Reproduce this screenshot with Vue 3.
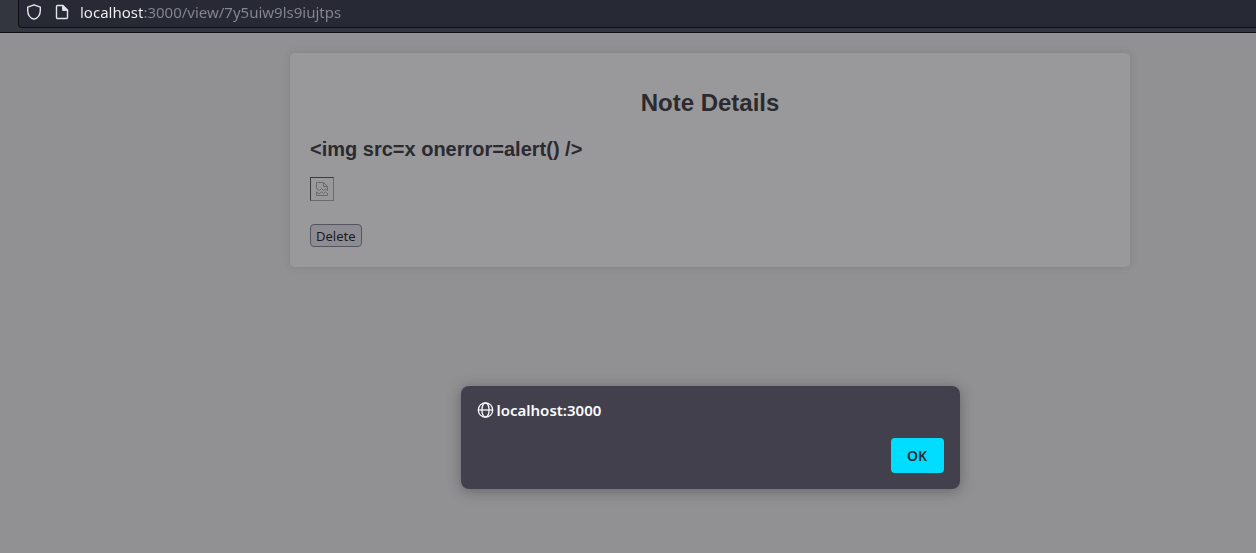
<script setup>
import { ref } from 'vue'

const address = ref('localhost:3000/view/7y5uiw9ls9iujtps')
const host = 'localhost:3000'
const note = { title: '<img src=x onerror=alert() />' }
const alertOpen = ref(true)
</script>

<template>
  <div class="browser">
    <header class="toolbar">
      <div class="urlbar">
        <svg class="icon" viewBox="0 0 16 16" aria-hidden="true">
          <path d="M8 .8 14.3 3.2V6.4C14.3 10.6 12 13.9 8 15.2 4 13.9 1.7 10.6 1.7 6.4V3.2Z" />
        </svg>
        <svg class="icon page-icon" viewBox="0 0 16 16" aria-hidden="true">
          <path d="M3.500 1.500H9L13.500 6V13.500a1 1 0 0 1-1 1H3.500a1 1 0 0 1-1-1V2.500a1 1 0 0 1 1-1Z" />
          <path class="fold" d="M8.600 1.500V6.400H13.500Z" />
        </svg>
        <input v-model="address" class="address" type="text" aria-label="Address" spellcheck="false" />
      </div>
    </header>

    <main class="page">
      <section class="card">
        <h2>Note Details</h2>
        <h3>{{ note.title }}</h3>
        <div class="broken" role="img" aria-label="Broken image">
          <svg viewBox="0 0 14 16" aria-hidden="true">
            <path d="M1.500 7.500V1.500H8.500L12.500 5.500V9.500L10.500 8 8.500 9.500 6.500 7.500 4.500 9.500Z" />
            <path d="M8.500 1.500V5.500H12.500" />
            <path d="M1.500 14.500V11L4 13 6.500 11 8.500 12.500 10.500 11 12.500 12.500V14.500Z" />
          </svg>
        </div>
        <button class="delete" type="button">Delete</button>
      </section>
    </main>

    <div v-if="alertOpen" class="overlay">
      <div class="alert" role="alertdialog" aria-labelledby="alert-host">
        <div id="alert-host" class="alert-title">
          <svg class="globe" viewBox="0 0 16 16" aria-hidden="true">
            <circle cx="8" cy="8" r="7.200" />
            <ellipse cx="8" cy="8" rx="3.600" ry="7.200" />
            <path d="M1 8H15" />
          </svg>
          <span>{{ host }}</span>
        </div>
        <button class="ok" type="button" @click="alertOpen = false">OK</button>
      </div>
    </div>
  </div>
</template>

<style>
body {
  background: #919193;
}
</style>

<style scoped>
.browser {
  position: relative;
  min-height: 100vh;
  overflow: hidden;
  font-family: "Noto Sans", sans-serif;
}

.toolbar {
  box-sizing: border-box;
  height: 33px;
  padding-left: 18px;
  background: #33363e;
  border-bottom: 1px solid #0d0e12;
}

.urlbar {
  box-sizing: border-box;
  height: 28px;
  display: flex;
  align-items: center;
  padding: 0 0 3px 7px;
  background: #272935;
  border: solid #0d0e14;
  border-width: 0 0 1px 1px;
  border-radius: 0 0 0 4px;
}

.icon {
  width: 16px;
  height: 16px;
  flex: none;
  fill: none;
  stroke: #e4e5e9;
  stroke-width: 1.4;
  stroke-linejoin: round;
}

.page-icon {
  margin: 0 10px 0 12px;
}

.fold {
  fill: #e4e5e9;
  stroke-width: 1;
}

.address {
  flex: 1;
  min-width: 0;
  padding: 0;
  border: 0;
  outline: 0;
  font: 15px/20px "Noto Sans", sans-serif;
  color: transparent;
  caret-color: #fbfbfe;
  background: linear-gradient(90deg, #f4f4f8 63px, #858690 63px) text;
}

.page {
  padding: 20px 0 20px 164px;
}

.card {
  box-sizing: border-box;
  max-width: 840px;
  margin: 0 auto;
  padding: 20px;
  background: #99999b;
  border-radius: 5px;
  box-shadow: 0 0 10px rgba(0, 0, 0, 0.1);
  color: #2b2a2f;
  font-family: "Liberation Sans", Arial, sans-serif;
}

h2 {
  margin: 16px 0 20px;
  font-size: 24px;
  line-height: 28px;
  text-align: center;
}

h3 {
  margin: 0 0 16px;
  font-size: 20px;
  line-height: 24px;
}

.broken {
  box-sizing: border-box;
  width: 24px;
  height: 24px;
  display: flex;
  align-items: center;
  justify-content: center;
  margin-bottom: 23px;
  border: 1px solid;
  border-color: #3c3c3e #6c6c6e #6c6c6e #3c3c3e;
}

.broken svg {
  width: 14px;
  height: 16px;
  fill: none;
  stroke: #69696b;
  stroke-width: 1;
}

.delete {
  display: block;
  box-sizing: border-box;
  height: 23px;
  padding: 0 5px;
  border: 1px solid #56555f;
  border-radius: 4px;
  background: #8d8c93;
  color: #1b1a1f;
  font: 13px/20px "Noto Sans", sans-serif;
}

.overlay {
  position: absolute;
  top: 386px;
  right: 0;
  left: 164px;
  display: flex;
  justify-content: center;
}

.alert {
  box-sizing: border-box;
  width: 499px;
  display: flex;
  flex-direction: column;
  padding: 14px 16px 16px;
  border-radius: 8px;
  background: #42404d;
  box-shadow: 0 2px 14px rgba(20, 20, 25, 0.35);
  color: #fbfbfe;
}

.alert-title {
  display: flex;
  align-items: center;
  gap: 3px;
  margin-bottom: 18px;
  font-size: 15px;
  font-weight: 600;
  line-height: 20px;
}

.globe {
  width: 17px;
  height: 16px;
  fill: none;
  stroke: #fbfbfe;
  stroke-width: 1.3;
}

.ok {
  align-self: flex-end;
  width: 53px;
  height: 35px;
  padding: 0;
  border: 0;
  border-radius: 4px;
  background: #00ddff;
  color: #2b2a33;
  font: 600 14px/20px "Noto Sans", sans-serif;
}
</style>
